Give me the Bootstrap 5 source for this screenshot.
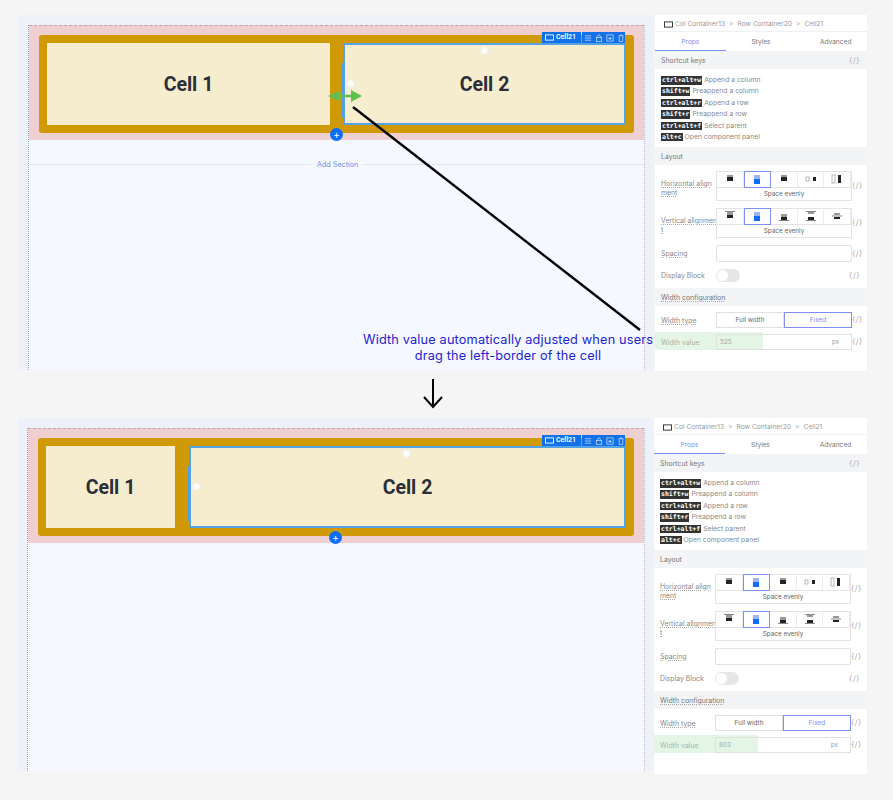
<!DOCTYPE html>
<html lang="en">
<head>
    <meta charset="UTF-8">
    <meta name="viewport" content="width=device-width, initial-scale=1.0">
    <title>Cell width editor</title>
    <link href="https://cdn.jsdelivr.net/npm/bootstrap@5.3.0/dist/css/bootstrap.min.css" rel="stylesheet">
    <style>
        body { background: #f5f5f6; font-family: Inter, "Liberation Sans", sans-serif; width: 893px; height: 800px; overflow: hidden; position: relative; }
        .shot { margin-left: 18px; width: 849px; }
        .shot-top { margin-top: 15px; height: 355px; }
        .shot-bottom { margin-top: 48px; height: 353px; }

        /* canvas */
        .stage { width: 636px; background: #eef2f8; padding: 10px 9px 0 10px; }
        .shot-bottom .stage { padding-left: 9px; }
        .page-area { height: 100%; background: #f5f9ff; border-left: 1px dotted #93a3c0; border-right: 1px dotted #b4bfd2; }
        .section-pink { background: #f0cfd0; height: 115px; padding: 9px 10px 7px; border-top: 1px dashed #b9a5b5; position: relative; }
        .row-gold { background: #d09a06; height: 98px; padding: 8px; border-radius: 3px; position: relative; gap: 13px; }
        .shot-bottom .row-gold { gap: 14px; }
        .cell-box { background: #f6ecce; color: #2a2f3a; font-family: Roboto, sans-serif; font-weight: 700; font-size: 19.5px; padding-top: 1px; }
        .cell-one { width: 283px; }
        .shot-bottom .cell-one { width: 129px; }
        .cell-two { flex: 1; position: relative; border: 2px solid #55a2e4; }
        .cell-two::before { content: ""; position: absolute; left: -3px; top: 18px; bottom: 5px; width: 1px; background: #4b9be4; }
        .handle { position: absolute; width: 9px; height: 9px; border-radius: 50%; background: #fbfbf8; border: 1px solid #ecebe4; }
        .handle-top { top: 1px; left: 135px; }
        .handle-left { top: 34px; left: 1px; }
        .shot-bottom .handle-top { left: 211px; }
        .tool-tag { position: absolute; top: -13px; right: 43px; height: 11px; width: 39px; background: #1271e8; color: #fff; font-size: 7px; font-weight: 600; gap: 2px; padding-left: 3px; }
        .tool-set { position: absolute; top: -13px; right: -1px; height: 11px; width: 43px; background: #1271e8; gap: 3px; padding-left: 2px; }
        .add-dot { position: absolute; left: 301px; top: 102px; width: 13px; height: 13px; border-radius: 50%; background: #0d6efd; color: #fff; font-size: 10px; line-height: 12px; text-align: center; }
        .add-line { height: 47px; position: relative; }
        .add-rule { position: absolute; top: 24px; left: 0; right: 0; border-top: 1px solid #e1e7f1; }
        .add-label { position: absolute; top: 19px; left: 282px; padding: 0 6px; background: #f5f9ff; color: #6c8cf0; font-size: 7.2px; line-height: 11px; }

        /* settings panel */
        .side-panel { width: 212px; margin-left: 1px; font-size: 6.9px; color: #8a8a8a; }
        .shot-bottom .side-panel { width: 213px; margin-left: 0; }
        .crumb-bar { height: 17px; background: #fff; padding: 2px 0 0 9px; gap: 2px; border-bottom: 1px solid #eef0f2; white-space: nowrap; font-size: 6.7px; }
        .crumb-part { color: #9a9a9a; }
        .crumb-sep { color: #aaa; margin: 0 2px; }
        .tab-bar { height: 19px; background: #fff; font-size: 6.6px; }
        .tab-item { width: 71px; color: #777; line-height: 20px; text-align: center; }
        .tab-item:last-child { padding-left: 8px; }
        .tab-active { color: #7c8ff0; border-bottom: 1px solid #7c8ff0; }
        .group-head { height: 18px; line-height: 20px; padding: 0 6px; background: #f3f4f5; color: #777; }
        .group-body { background: #fff; padding: 0 6px; }
        .keys-body { height: 78px; padding-top: 5px; }
        .key-row { height: 11.4px; line-height: 11.4px; white-space: nowrap; color: #8a8a8a; font-size: 6.8px; }
        .key-chip { display: inline-block; height: 8.5px; line-height: 8.5px; vertical-align: 0; background: #333; color: #fff; font-family: "DejaVu Sans Mono", monospace; font-weight: 700; font-size: 6.5px; padding: 0 1px; margin-right: 2px; }
        .layout-body { height: 123px; padding-top: 6px; }
        .width-body { height: 65px; padding-top: 6px; }
        .form-line { position: relative; }
        .form-name { width: 55px; line-height: 9px; flex: none; white-space: nowrap; }
        .line-align .form-name { margin-top: 3px; }
        .dot-under { text-decoration: underline dotted #aaa; }
        .control-box { width: 136px; flex: none; }
        .code-mark { color: #aaa; margin-left: auto; font-size: 7.5px; padding-right: 1px; letter-spacing: .6px; }
        .seg-row { height: 16px; border: 1px solid #e4e4e4; border-bottom: 0; }
        .seg-btn { flex: 1; height: 16px; margin-top: -1px; border-right: 1px solid #ececec; }
        .seg-on { border: 1px solid #7c8ff0; margin-bottom: -1px; height: 17px; }
        .pick-box { height: 14px; border: 1px solid #e4e4e4; color: #666; text-align: center; line-height: 12px; font-size: 6.4px; }
        .line-align { height: 30px; margin-bottom: 7px; }
        .line-spacing { height: 17px; margin-bottom: 7px; }
        .line-toggle { height: 13px; }
        .plain-input { height: 17px; border: 1px solid #e0e0e0; border-radius: 2px; }
        .toggle-off { width: 24px; height: 13px; border-radius: 7px; background: #e6e6e6; position: relative; }
        .toggle-off::after { content: ""; position: absolute; top: 1px; left: 1px; width: 11px; height: 11px; border-radius: 50%; background: #fff; }
        .pair-btn { flex: 1; height: 16px; border: 1px solid #e0e0e0; line-height: 14px; text-align: center; color: #666; font-size: 6.4px; }
        .pair-on { border-color: #7c8ff0; color: #7c8ff0; }
        .line-type { height: 16px; margin-bottom: 6px; }
        .line-value { height: 16px; position: relative; }
        .line-value .form-name { color: #a9b3a9; }
        .green-wash { position: absolute; left: -6px; top: -2px; height: 18px; background: #dff2df; opacity: .8; }
        .wash-wide { width: 108px; }
        .wash-narrow { width: 104px; }
        .value-box { height: 16px; border: 1px solid #e0e0e0; padding: 0 12px 0 3px; color: #9aa; line-height: 14px; font-size: 6.4px; position: relative; }

        /* annotation layer */
        .note-layer { position: absolute; left: 0; top: 0; pointer-events: none; }
        .note-text { position: absolute; left: 353px; top: 332px; width: 310px; color: #2424cf; font-size: 12.75px; line-height: 16px; text-align: center; letter-spacing: .15px; }
    </style>
</head>
<body>
    <svg width="0" height="0" class="position-absolute">
        <symbol id="ic-screen" viewBox="0 0 10 7"><rect x=".6" y=".6" width="8.8" height="5.8" fill="none" stroke="currentColor" stroke-width="1"/></symbol>
        <symbol id="ic-h1" viewBox="0 0 14 10"><rect x="4" y="1" width="6" height="2" fill="#999"/><rect x="4" y="3" width="6" height="4" fill="currentColor"/></symbol>
        <symbol id="ic-h2" viewBox="0 0 14 10"><rect x="4" y="0" width="6" height="4" fill="#9db4f0"/><rect x="4" y="4" width="6" height="5" fill="currentColor"/></symbol>
        <symbol id="ic-h4" viewBox="0 0 14 10"><rect x="2" y="3" width="3" height="4" fill="none" stroke="#999" stroke-width=".7"/><rect x="9" y="3" width="3" height="4" fill="currentColor"/></symbol>
        <symbol id="ic-h5" viewBox="0 0 14 10"><rect x="2" y="1" width="3" height="8" fill="none" stroke="#999" stroke-width=".7"/><rect x="8" y="1" width="3" height="8" fill="currentColor"/></symbol>
        <symbol id="ic-v1" viewBox="0 0 14 10"><path d="M2 .5h10" stroke="#555" stroke-width=".7"/><rect x="4" y="1" width="6" height="3" fill="#999"/><rect x="4" y="4" width="6" height="3" fill="currentColor"/></symbol>
        <symbol id="ic-v3" viewBox="0 0 14 10"><path d="M2 9.5h10" stroke="#555" stroke-width=".7"/><rect x="4" y="3" width="6" height="3" fill="#999"/><rect x="4" y="6" width="6" height="3" fill="currentColor"/></symbol>
        <symbol id="ic-v4" viewBox="0 0 14 10"><path d="M2 .5h10M2 9.5h10" stroke="#555" stroke-width=".7"/><rect x="4" y="1" width="6" height="2" fill="#999"/><rect x="4" y="6" width="6" height="3" fill="currentColor"/></symbol>
        <symbol id="ic-v5" viewBox="0 0 14 10"><path d="M2 5h10" stroke="#555" stroke-width=".7"/><rect x="4" y="2" width="6" height="2" fill="#999"/><rect x="4" y="6" width="6" height="2" fill="currentColor"/></symbol>
        <symbol id="ic-list" viewBox="0 0 9 9"><path d="M1 2h7M1 4.500h7M1 7h7" stroke="#cfe2ff" fill="none" stroke-width=".8"/></symbol>
        <symbol id="ic-lock" viewBox="0 0 9 9"><rect x="1.500" y="4" width="6" height="4.500" fill="none" stroke="#cfe2ff" stroke-width=".8"/><path d="M3 4V2.500a1.500 1.500 0 0 1 3 0V4" stroke="#cfe2ff" fill="none" stroke-width=".8"/></symbol>
        <symbol id="ic-save" viewBox="0 0 9 9"><rect x="1" y="1" width="7" height="7" fill="none" stroke="#cfe2ff" stroke-width=".8"/><path d="M3 4h3v2H3z" fill="#cfe2ff"/></symbol>
        <symbol id="ic-bin" viewBox="0 0 9 9"><path d="M1.500 2h6M3.500 2V1h2v1M2.500 2.500v6h4v-6" stroke="#cfe2ff" fill="none" stroke-width=".8"/></symbol>
    </svg>

    <div class="shot shot-top d-flex">
        <div class="stage">
            <div class="page-area">
                <div class="section-pink">
                    <div class="row-gold d-flex">
                        <div class="cell-box cell-one d-flex align-items-center justify-content-center">Cell 1</div>
                        <div class="cell-box cell-two d-flex align-items-center justify-content-center">
                            Cell 2
                            <span class="handle handle-top"></span>
                            <span class="handle handle-left"></span>
                            <span class="tool-tag d-flex align-items-center"><svg width="9" height="7"><use href="#ic-screen"/></svg>Cell21</span>
                            <span class="tool-set d-flex align-items-center">
                                <svg width="8" height="8"><use href="#ic-list"/></svg>
                                <svg width="8" height="8"><use href="#ic-lock"/></svg>
                                <svg width="8" height="8"><use href="#ic-save"/></svg>
                                <svg width="8" height="8"><use href="#ic-bin"/></svg>
                            </span>
                        </div>
                    </div>
                    <span class="add-dot">+</span>
                </div>
                <div class="add-line">
                    <div class="add-rule"></div>
                    <span class="add-label">Add Section</span>
                </div>
            </div>
        </div>
        <div class="side-panel">
            <div class="crumb-bar d-flex align-items-center">
                <svg width="9" height="7" class="text-dark"><use href="#ic-screen"/></svg>
                <span class="crumb-part">Col Container13</span><span class="crumb-sep">&gt;</span>
                <span class="crumb-part">Row Container20</span><span class="crumb-sep">&gt;</span>
                <span class="crumb-part">Cell21</span>
            </div>
            <div class="tab-bar d-flex">
                <div class="tab-item tab-active">Props</div>
                <div class="tab-item">Styles</div>
                <div class="tab-item">Advanced</div>
            </div>
            <div class="group-head d-flex">Shortcut keys<span class="code-mark">{/}</span></div>
            <div class="group-body keys-body">
                <div class="key-row"><span class="key-chip">ctrl+alt+w</span>Append a column</div>
                <div class="key-row"><span class="key-chip">shift+w</span>Preappend a column</div>
                <div class="key-row"><span class="key-chip">ctrl+alt+r</span>Append a row</div>
                <div class="key-row"><span class="key-chip">shift+r</span>Preappend a row</div>
                <div class="key-row"><span class="key-chip">ctrl+alt+f</span>Select parent</div>
                <div class="key-row"><span class="key-chip">alt+c</span>Open component panel</div>
            </div>
            <div class="group-head">Layout</div>
            <div class="group-body layout-body">
                <div class="form-line line-align d-flex align-items-center">
                    <div class="form-name dot-under">Horizontal align<br>ment</div>
                    <div class="control-box">
                        <div class="seg-row d-flex">
                            <div class="seg-btn d-flex align-items-center justify-content-center text-dark"><svg width="14" height="10"><use href="#ic-h1"/></svg></div>
                            <div class="seg-btn seg-on d-flex align-items-center justify-content-center text-primary"><svg width="14" height="10"><use href="#ic-h2"/></svg></div>
                            <div class="seg-btn d-flex align-items-center justify-content-center text-dark"><svg width="14" height="10"><use href="#ic-h1"/></svg></div>
                            <div class="seg-btn d-flex align-items-center justify-content-center text-dark"><svg width="14" height="10"><use href="#ic-h4"/></svg></div>
                            <div class="seg-btn d-flex align-items-center justify-content-center text-dark"><svg width="14" height="10"><use href="#ic-h5"/></svg></div>
                        </div>
                        <div class="pick-box">Space evenly</div>
                    </div>
                    <span class="code-mark">{/}</span>
                </div>
                <div class="form-line line-align d-flex align-items-center">
                    <div class="form-name dot-under">Vertical alignmen<br>t</div>
                    <div class="control-box">
                        <div class="seg-row d-flex">
                            <div class="seg-btn d-flex align-items-center justify-content-center text-dark"><svg width="14" height="10"><use href="#ic-v1"/></svg></div>
                            <div class="seg-btn seg-on d-flex align-items-center justify-content-center text-primary"><svg width="14" height="10"><use href="#ic-h2"/></svg></div>
                            <div class="seg-btn d-flex align-items-center justify-content-center text-dark"><svg width="14" height="10"><use href="#ic-v3"/></svg></div>
                            <div class="seg-btn d-flex align-items-center justify-content-center text-dark"><svg width="14" height="10"><use href="#ic-v4"/></svg></div>
                            <div class="seg-btn d-flex align-items-center justify-content-center text-dark"><svg width="14" height="10"><use href="#ic-v5"/></svg></div>
                        </div>
                        <div class="pick-box">Space evenly</div>
                    </div>
                    <span class="code-mark">{/}</span>
                </div>
                <div class="form-line line-spacing d-flex align-items-center">
                    <div class="form-name dot-under">Spacing</div>
                    <div class="control-box plain-input"></div>
                    <span class="code-mark">{/}</span>
                </div>
                <div class="form-line line-toggle d-flex align-items-center">
                    <div class="form-name">Display Block</div>
                    <div class="toggle-off"></div>
                    <span class="code-mark">{/}</span>
                </div>
            </div>
            <div class="group-head dot-under">Width configuration</div>
            <div class="group-body width-body">
                <div class="form-line line-type d-flex align-items-center">
                    <div class="form-name dot-under">Width type</div>
                    <div class="control-box d-flex">
                        <div class="pair-btn">Full width</div>
                        <div class="pair-btn pair-on">Fixed</div>
                    </div>
                    <span class="code-mark">{/}</span>
                </div>
                <div class="form-line line-value d-flex align-items-center">
                    <div class="green-wash wash-wide"></div>
                    <div class="form-name position-relative">Width value</div>
                    <div class="control-box value-box d-flex justify-content-between"><span>525</span><span>px</span></div>
                    <span class="code-mark">{/}</span>
                </div>
            </div>
        </div>
    </div>

    <div class="shot shot-bottom d-flex">
        <div class="stage">
            <div class="page-area">
                <div class="section-pink">
                    <div class="row-gold d-flex">
                        <div class="cell-box cell-one d-flex align-items-center justify-content-center">Cell 1</div>
                        <div class="cell-box cell-two d-flex align-items-center justify-content-center">
                            Cell 2
                            <span class="handle handle-top"></span>
                            <span class="handle handle-left"></span>
                            <span class="tool-tag d-flex align-items-center"><svg width="9" height="7"><use href="#ic-screen"/></svg>Cell21</span>
                            <span class="tool-set d-flex align-items-center">
                                <svg width="8" height="8"><use href="#ic-list"/></svg>
                                <svg width="8" height="8"><use href="#ic-lock"/></svg>
                                <svg width="8" height="8"><use href="#ic-save"/></svg>
                                <svg width="8" height="8"><use href="#ic-bin"/></svg>
                            </span>
                        </div>
                    </div>
                    <span class="add-dot">+</span>
                </div>
            </div>
        </div>
        <div class="side-panel">
            <div class="crumb-bar d-flex align-items-center">
                <svg width="9" height="7" class="text-dark"><use href="#ic-screen"/></svg>
                <span class="crumb-part">Col Container13</span><span class="crumb-sep">&gt;</span>
                <span class="crumb-part">Row Container20</span><span class="crumb-sep">&gt;</span>
                <span class="crumb-part">Cell21</span>
            </div>
            <div class="tab-bar d-flex">
                <div class="tab-item tab-active">Props</div>
                <div class="tab-item">Styles</div>
                <div class="tab-item">Advanced</div>
            </div>
            <div class="group-head d-flex">Shortcut keys<span class="code-mark">{/}</span></div>
            <div class="group-body keys-body">
                <div class="key-row"><span class="key-chip">ctrl+alt+w</span>Append a column</div>
                <div class="key-row"><span class="key-chip">shift+w</span>Preappend a column</div>
                <div class="key-row"><span class="key-chip">ctrl+alt+r</span>Append a row</div>
                <div class="key-row"><span class="key-chip">shift+r</span>Preappend a row</div>
                <div class="key-row"><span class="key-chip">ctrl+alt+f</span>Select parent</div>
                <div class="key-row"><span class="key-chip">alt+c</span>Open component panel</div>
            </div>
            <div class="group-head">Layout</div>
            <div class="group-body layout-body">
                <div class="form-line line-align d-flex align-items-center">
                    <div class="form-name dot-under">Horizontal align<br>ment</div>
                    <div class="control-box">
                        <div class="seg-row d-flex">
                            <div class="seg-btn d-flex align-items-center justify-content-center text-dark"><svg width="14" height="10"><use href="#ic-h1"/></svg></div>
                            <div class="seg-btn seg-on d-flex align-items-center justify-content-center text-primary"><svg width="14" height="10"><use href="#ic-h2"/></svg></div>
                            <div class="seg-btn d-flex align-items-center justify-content-center text-dark"><svg width="14" height="10"><use href="#ic-h1"/></svg></div>
                            <div class="seg-btn d-flex align-items-center justify-content-center text-dark"><svg width="14" height="10"><use href="#ic-h4"/></svg></div>
                            <div class="seg-btn d-flex align-items-center justify-content-center text-dark"><svg width="14" height="10"><use href="#ic-h5"/></svg></div>
                        </div>
                        <div class="pick-box">Space evenly</div>
                    </div>
                    <span class="code-mark">{/}</span>
                </div>
                <div class="form-line line-align d-flex align-items-center">
                    <div class="form-name dot-under">Vertical alignmen<br>t</div>
                    <div class="control-box">
                        <div class="seg-row d-flex">
                            <div class="seg-btn d-flex align-items-center justify-content-center text-dark"><svg width="14" height="10"><use href="#ic-v1"/></svg></div>
                            <div class="seg-btn seg-on d-flex align-items-center justify-content-center text-primary"><svg width="14" height="10"><use href="#ic-h2"/></svg></div>
                            <div class="seg-btn d-flex align-items-center justify-content-center text-dark"><svg width="14" height="10"><use href="#ic-v3"/></svg></div>
                            <div class="seg-btn d-flex align-items-center justify-content-center text-dark"><svg width="14" height="10"><use href="#ic-v4"/></svg></div>
                            <div class="seg-btn d-flex align-items-center justify-content-center text-dark"><svg width="14" height="10"><use href="#ic-v5"/></svg></div>
                        </div>
                        <div class="pick-box">Space evenly</div>
                    </div>
                    <span class="code-mark">{/}</span>
                </div>
                <div class="form-line line-spacing d-flex align-items-center">
                    <div class="form-name dot-under">Spacing</div>
                    <div class="control-box plain-input"></div>
                    <span class="code-mark">{/}</span>
                </div>
                <div class="form-line line-toggle d-flex align-items-center">
                    <div class="form-name">Display Block</div>
                    <div class="toggle-off"></div>
                    <span class="code-mark">{/}</span>
                </div>
            </div>
            <div class="group-head dot-under">Width configuration</div>
            <div class="group-body width-body">
                <div class="form-line line-type d-flex align-items-center">
                    <div class="form-name dot-under">Width type</div>
                    <div class="control-box d-flex">
                        <div class="pair-btn">Full width</div>
                        <div class="pair-btn pair-on">Fixed</div>
                    </div>
                    <span class="code-mark">{/}</span>
                </div>
                <div class="form-line line-value d-flex align-items-center">
                    <div class="green-wash wash-narrow"></div>
                    <div class="form-name position-relative">Width value</div>
                    <div class="control-box value-box d-flex justify-content-between"><span>803</span><span>px</span></div>
                    <span class="code-mark">{/}</span>
                </div>
            </div>
        </div>
    </div>

    <!-- arrows and the note lie over the first screenshot -->
    <svg class="note-layer" width="893" height="800">
        <path d="M353 107 640 330" stroke="#000" stroke-width="2.4" fill="none"/>
        <path d="M338 96h16" stroke="#5fbf50" stroke-width="2.5" fill="none"/>
        <path d="M328 96l11-5v10zM362 96l-11-6v12z" fill="#5fbf50"/>
        <path d="M433 379v27M424 397l9 10 9-10" stroke="#000" stroke-width="2" fill="none"/>
    </svg>
    <div class="note-text">Width value automatically adjusted when users<br>drag the left-border of the cell</div>

    <script src="https://cdn.jsdelivr.net/npm/bootstrap@5.3.0/dist/js/bootstrap.bundle.min.js"></script>
</body>
</html>
